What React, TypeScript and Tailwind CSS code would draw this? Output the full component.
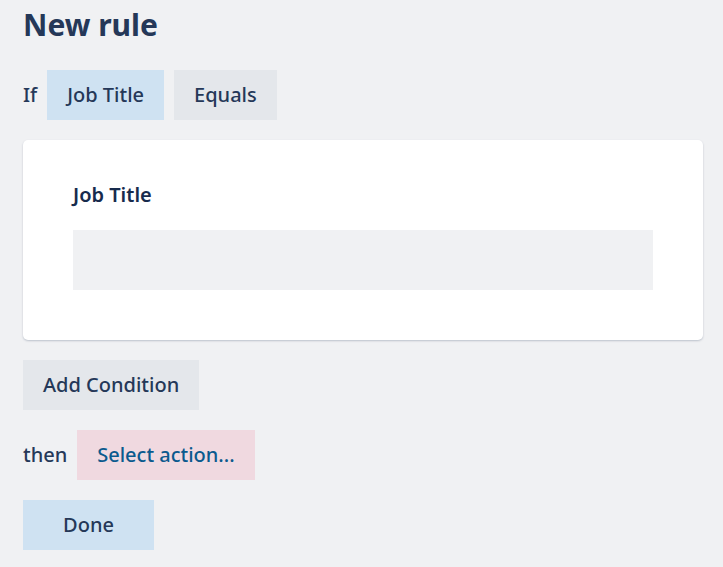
import React from "react";

export default function App() {
  return (
    <div
      className="min-h-[567px] w-full bg-[#f0f1f3] px-[23px] text-[#253858]"
      style={{ fontFamily: '"Noto Sans", "Open Sans", sans-serif' }}
    >
      <div className="pt-[5px]">
        <h1 className="text-[30px] font-bold leading-[40px] text-[#253858]">New rule</h1>
      </div>
      <div className="mt-[25px] flex items-center gap-[10px]">
        <span className="text-[20px] font-medium">If</span>
        <button className="h-[50px] bg-[#cfe2f2] px-[20px] text-[20px] font-medium text-[#253858]">
          Job Title
        </button>
        <button className="h-[50px] bg-[#e4e7eb] px-[20px] text-[20px] font-medium text-[#253858]">
          Equals
        </button>
      </div>
      <div className="mt-[20px] h-[200px] w-[680px] rounded-[5px] bg-white px-[50px] pt-[40px] shadow-[0_1px_2px_rgba(37,56,88,0.25)]">
        <div className="text-[20px] font-semibold leading-[30px] text-[#172b4d]">Job Title</div>
        <div className="mt-[20px] h-[60px] bg-[#f0f1f3]" />
      </div>
      <div className="mt-[20px]">
        <button className="h-[50px] bg-[#e4e7eb] px-[20px] text-[20px] font-medium text-[#253858]">
          Add Condition
        </button>
      </div>
      <div className="mt-[20px] flex items-center gap-[10px]">
        <span className="text-[20px] font-medium">then</span>
        <button className="h-[50px] bg-[#f0d9e0] px-[20px] text-[20px] font-medium text-[#0b5a8e]">
          Select action...
        </button>
      </div>
      <div className="mt-[20px]">
        <button className="h-[50px] w-[131px] bg-[#cfe2f2] text-[20px] font-medium text-[#253858]">
          Done
        </button>
      </div>
    </div>
  );
}
